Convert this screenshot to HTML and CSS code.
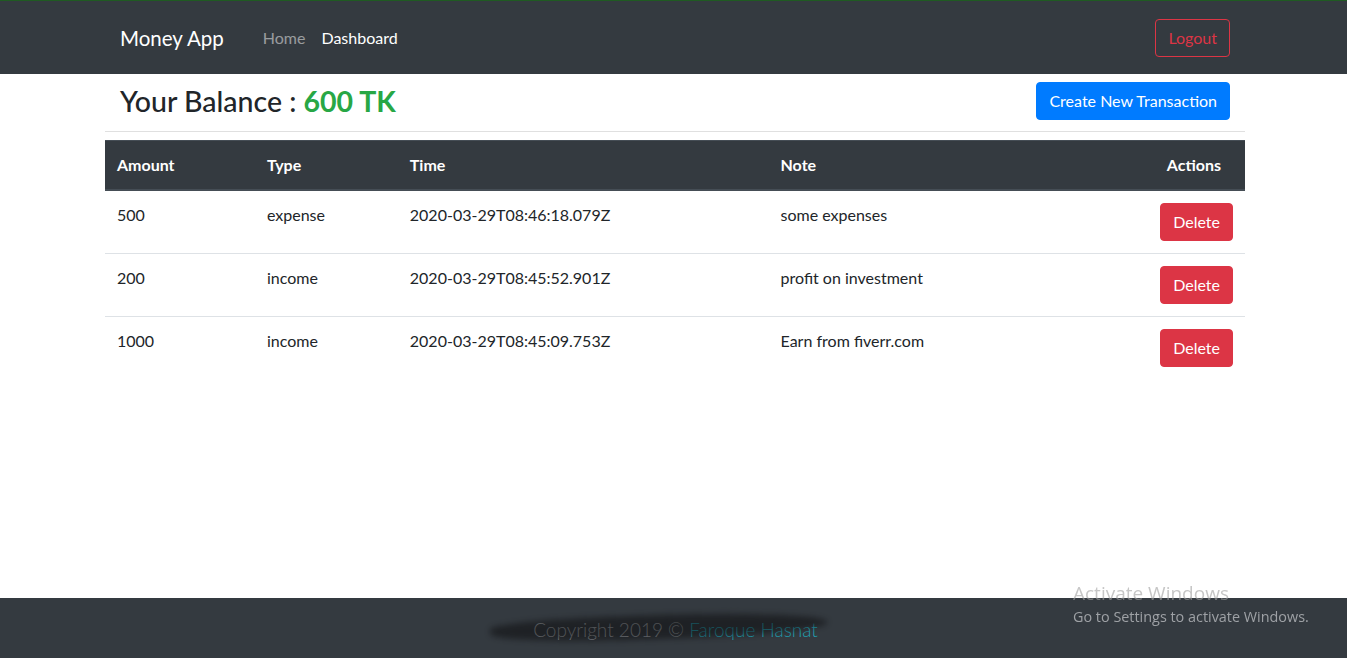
FILE: index.html
```html
<!DOCTYPE html>
<html>
<head>
<meta charset="utf-8">
<title>Money App</title>
<link rel="stylesheet" href="styles.css">
</head>
<body>
<div class="page">
  <nav class="navbar">
    <div class="nav-inner">
      <div class="nav-left">
        <span class="brand">Money App</span>
        <a class="nav-link muted">Home</a>
        <a class="nav-link active">Dashboard</a>
      </div>
      <button class="btn btn-outline-danger">Logout</button>
    </div>
  </nav>

  <main class="container">
    <div class="balance-row">
      <h3 class="balance">Your Balance : <span class="amount">600 TK</span></h3>
      <button class="btn btn-primary">Create New Transaction</button>
    </div>
    <hr class="divider">
    <table class="table">
      <thead>
        <tr>
          <th class="c-amount">Amount</th>
          <th class="c-type">Type</th>
          <th class="c-time">Time</th>
          <th class="c-note">Note</th>
          <th class="c-actions">Actions</th>
        </tr>
      </thead>
      <tbody>
        <tr>
          <td>500</td>
          <td>expense</td>
          <td>2020-03-29T08:46:18.079Z</td>
          <td>some expenses</td>
          <td class="actions"><button class="btn btn-danger">Delete</button></td>
        </tr>
        <tr>
          <td>200</td>
          <td>income</td>
          <td>2020-03-29T08:45:52.901Z</td>
          <td>profit on investment</td>
          <td class="actions"><button class="btn btn-danger">Delete</button></td>
        </tr>
        <tr>
          <td>1000</td>
          <td>income</td>
          <td>2020-03-29T08:45:09.753Z</td>
          <td>Earn from fiverr.com</td>
          <td class="actions"><button class="btn btn-danger">Delete</button></td>
        </tr>
      </tbody>
    </table>
  </main>

  <footer class="footer">
    <p class="copy">Copyright 2019 © <a class="author">Faroque Hasnat</a></p>
    <span class="scribble"></span>
  </footer>
</div>

<div class="activate">
  <div class="act-title">Activate Windows</div>
  <div class="act-sub">Go to Settings to activate Windows.</div>
</div>
</body>
</html>
```

FILE: styles.css
```css
* { box-sizing: border-box; }

html, body {
  margin: 0;
  padding: 0;
}

body {
  font-family: "Lato", "Open Sans", sans-serif;
  font-size: 16px;
  line-height: 24px;
  color: #212529;
  background: #fff;
}

.page {
  min-height: 658px;
  display: flex;
  flex-direction: column;
}

/* Navbar */
.navbar {
  background: #343a40;
  border-top: 1px solid #1f5a22;
  height: 74px;
  display: flex;
  align-items: center;
}

.nav-inner {
  width: 1140px;
  margin-left: calc((100% - 1140px) / 2 + 1.5px);
  padding: 0 15px;
  display: flex;
  align-items: center;
  justify-content: space-between;
}

.nav-left {
  display: flex;
  align-items: center;
}

.brand {
  font-size: 20.5px;
  line-height: 30px;
  color: #fff;
  margin-right: 39px;
}

.nav-link {
  font-size: 16px;
  margin-right: 16px;
  cursor: pointer;
}

.nav-link.muted { color: rgba(255, 255, 255, 0.5); }
.nav-link.active { color: #fff; }

/* Buttons */
.btn {
  font-family: inherit;
  font-size: 16px;
  line-height: 24px;
  padding: 6px 12px;
  border-radius: 4px;
  border: 1px solid transparent;
  cursor: pointer;
}

.btn-outline-danger {
  background: transparent;
  color: #dc3545;
  border-color: #dc3545;
}

.btn-primary {
  background: #007bff;
  border-color: #007bff;
  color: #fff;
}

.btn-danger {
  background: #dc3545;
  border-color: #dc3545;
  color: #fff;
}

/* Main */
.container {
  width: 1140px;
  margin-left: calc((100% - 1140px) / 2 + 1.5px);
}

.balance-row {
  display: flex;
  align-items: center;
  justify-content: space-between;
  padding: 8px 15px 0;
}

.balance {
  margin: 0;
  font-size: 28.5px;
  line-height: 38px;
  font-weight: 500;
  color: #212529;
}

.amount {
  color: #28a745;
  font-weight: 700;
}

.divider {
  margin: 11px 0 8px;
  border: 0;
  border-top: 1px solid rgba(0, 0, 0, 0.12);
}

.table {
  width: 100%;
  border-collapse: collapse;
}

.table th,
.table td {
  padding: 12px;
  text-align: left;
  vertical-align: top;
}

.table th {
  background: #343a40;
  color: #fff;
  font-weight: 700;
  border-top: 1px solid #454d55;
  border-bottom: 2px solid #454d55;
}

.table td {
  border-top: 1px solid #dee2e6;
}

.c-amount { width: 150px; }
.c-type { width: 143px; }
.c-time { width: 371px; }
.c-note { width: 380px; }
.table th.c-actions {
  width: 96px;
  text-align: right;
  padding-right: 24px;
}

.table td.actions { text-align: right; }

/* Footer */
.footer {
  margin-top: auto;
  height: 60px;
  background: #343a40;
  position: relative;
  display: flex;
  align-items: center;
  justify-content: center;
}

.copy {
  margin: 0 0 0 4px;
  font-size: 19px;
  font-weight: 300;
  line-height: 30px;
  color: #9ca1a6;
  padding-top: 3px;
}

.author { color: #22a0b3; }

.scribble {
  position: absolute;
  left: 490px;
  top: 17px;
  width: 338px;
  height: 24px;
  background: rgba(12, 13, 15, 0.55);
  border-radius: 40% 60% 50% 50%;
  filter: blur(3px);
  transform: rotate(-2deg);
  pointer-events: none;
}

/* Watermark */
.activate {
  position: fixed;
  left: 1073px;
  top: 580px;
  pointer-events: none;
}

.act-title {
  font-family: "Open Sans", sans-serif;
  font-size: 19px;
  line-height: 26px;
  color: rgba(160, 160, 160, 0.6);
}

.act-sub {
  font-family: "Open Sans", sans-serif;
  font-size: 14.4px;
  line-height: 22px;
  color: #9ea1a5;
}
```
